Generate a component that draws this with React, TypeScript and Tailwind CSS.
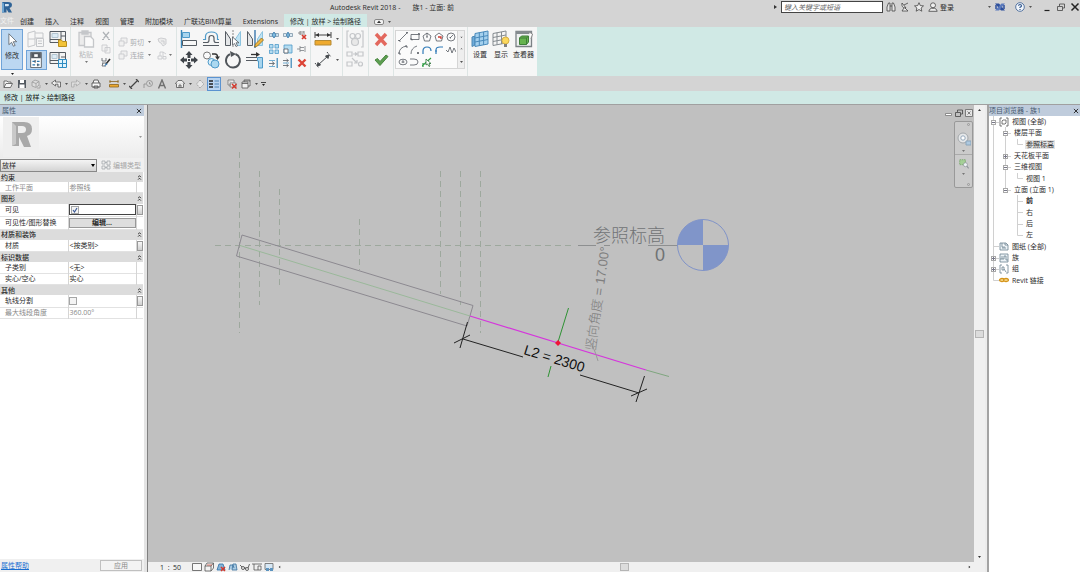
import type { ReactNode } from "react";

const INK = "#555b62";
const BLUE = "#4f9ac9";
const PALE = "#c5c7ca";

// Every drawing sits in its own square grid: 18 for big ribbon icons, 10 for small ones
const icons: Record<string, ReactNode> = {
  cursor: <path d="M5 1v14l3.500-3 2.300 5 2.200-1-2.400-4.800H15z" fill="#fff" stroke={INK} />,
  family: (
    <g fill="none" stroke={PALE}>
      <path d="M1 3l7-2v14l-7 2zM8 3h8v5H8M1 9h7" />
      <path d="M9.500 8.500h7v8h-7zM11 11h4M11 13.500h4" fill="#f5f5f5" />
    </g>
  ),
  familyLoad: (
    <g>
      <path d="M1 1.500h15.500v11H1z" fill="#f3f3f3" stroke={INK} />
      <path d="M1 9.500h11V1.500M12 6h4.500" fill="none" stroke={INK} />
      <path d="M3 3.500h6v4H3z" fill="#dcebf5" stroke="#b4c6d2" />
      <path d="M9.500 10h3l1 1.500h4v5h-8z" fill="#f2c237" stroke="#b98e1c" />
    </g>
  ),
  familyProject: (
    <g>
      <path d="M1 1.500h15.500v11H1z" fill="#f3f3f3" stroke={INK} />
      <path d="M1 9.500h9V1.500M12 6h4.500" fill="none" stroke={INK} />
      <path d="M3 3.500h5v4H3z" fill="#dcebf5" stroke="#b4c6d2" />
      <path d="M9.500 8.500h8v8h-8zM13.500 8.500v8M9.500 12.500h8" fill="#e2f4fc" stroke="#2f8cc2" />
    </g>
  ),
  properties: (
    <g>
      <path d="M3 .5h12v17H3z" fill="#fff" stroke={INK} />
      <path d="M3.500 1h11v6h-11z" fill={INK} />
      <path d="M7 2.500h4v3H7z" fill="#fff" />
      <path d="M5 10.500h3M10 10.500h3M5 14.500h3M10 14.500h3" stroke="#2b76ad" strokeWidth="1.300" />
      <path d="M8 9v3M11 13v3" stroke={INK} strokeWidth="1.300" />
    </g>
  ),
  paste: (
    <g fill="#ececec" stroke={PALE} strokeWidth="1.300">
      <path d="M2 2.500h12v13H2zM5 1h6v3H5z" />
      <path d="M7.500 6.500h6l3 3v7.500h-9z" fill="#fafafa" />
    </g>
  ),
  cut: <path d="M2 1l5.500 6.500M8 1L2.500 7.500M1 8.500h2M7 8.500h2" stroke="#aeb2b6" strokeWidth="1.200" fill="none" />,
  copy: <path d="M1 1h5v6H1zM4 3.500h5V9H4z" fill="#f3f3f3" stroke={PALE} />,
  brush: (
    <g fill="none">
      <path d="M1 1v3h4V1M1 6h4M2 6l-1 3h4" stroke={INK} />
      <path d="M9 2L5 7" stroke="#333" strokeWidth="1.600" />
      <path d="M5 6l-2 3.500 3.500-2z" fill="#3f82bb" />
    </g>
  ),
  cope: <path d="M3 1h6v5H6v3H1V4h2zM3 4h3v2" fill="#f0f0f0" stroke={PALE} />,
  joinFace: <path d="M1 2l3-1 5 1v5L6 9 4 6 2 5zM4 4h3v3" fill="#ececec" stroke={PALE} />,
  demolish: <path d="M1 6h4v3H1zM3 6V2h3v4M6 6.500h3V9H6zM6 2l3 2" fill="none" stroke={PALE} />,
  align: (
    <g>
      <path d="M1.500 0v18" stroke="#3b87b8" strokeWidth="1.400" />
      <path d="M2.500 2.500h7v5h-7z" fill="#a8d5ee" stroke={BLUE} />
      <path d="M2.500 10.500h14v5h-14z" fill="#f7f7f7" stroke={INK} />
    </g>
  ),
  offset: (
    <g fill="none">
      <path d="M1 15.500h16M1 12.500h4q2 0 2-2.500V8q0-2.500 2.500-2.500T12 8v2q0 2.500 2 2.500h3" stroke={INK} strokeWidth="1.200" />
      <path d="M1 9.500h2.500V6Q4 2 9.500 2T15.500 6v3.500H17" stroke={BLUE} strokeWidth="1.200" />
    </g>
  ),
  mirrorPick: (
    <g>
      <path d="M1.500 1.500v14h5V9z" fill="#e4e6e8" stroke={INK} />
      <path d="M16.500 1.500v14h-5V9z" fill="#bfe3f3" stroke="#8cc3df" />
      <path d="M9 0v18" stroke="#888" strokeDasharray="2 1" />
      <path d="M8.500 7v8l2-1.500 1.500 3 1.500-.7-1.500-3H15z" fill="#fff" stroke={INK} strokeWidth=".8" />
    </g>
  ),
  mirrorDraw: (
    <g>
      <path d="M1.500 1.500v14h5V9z" fill="#e4e6e8" stroke={INK} />
      <path d="M16.500 1.500v14h-5V9z" fill="#bfe3f3" stroke="#8cc3df" />
      <path d="M9 0v18" stroke="#2d6ea8" strokeWidth="1.300" />
      <path d="M15.500 8l2 2-6 6-3 1 1-3z" fill="#f1b740" stroke="#8a6a20" strokeWidth=".8" />
    </g>
  ),
  move: (
    <g fill="#3f444a">
      <path d="M9 0l3.500 4h-2v3h-3V4h-2zM9 18l3.500-4h-2v-3h-3v3h-2zM0 9l4-3.500v2h3v3H4v2zM18 9l-4-3.500v2h-3v3h3v2z" />
      <path d="M8 8h2v2H8z" />
    </g>
  ),
  copyLarge: (
    <g>
      <circle cx="5" cy="4.500" r="3.500" fill="#fafafa" stroke="#777" />
      <path d="M10 3h3q2.500 0 2.500 3" fill="none" stroke="#333" strokeWidth="1.400" />
      <path d="M13 5.500h5L15.500 9z" fill="#333" />
      <circle cx="9.500" cy="11" r="3.500" fill="#d8eefa" stroke={BLUE} />
      <circle cx="13" cy="13" r="4" fill="#abd8f0" stroke={BLUE} />
    </g>
  ),
  rotate: (
    <g>
      <path d="M11.500 3A7 7 0 1 1 6 3.200" fill="none" stroke="#50555a" strokeWidth="1.900" />
      <path d="M6 0l6 3L7 6z" fill="#50555a" />
    </g>
  ),
  trim: (
    <g>
      <path d="M0 6.500h11M0 9.500h11" stroke={INK} />
      <path d="M5 3.500h6" stroke="#333" strokeWidth="1.300" />
      <path d="M10 1l4 2.500-4 2.500z" fill="#333" />
      <path d="M11.500 6.500h5V17h-4V10h-1z" fill="#a8d5ee" stroke={BLUE} />
    </g>
  ),
  split: (
    <g>
      <path d="M.5 3.500h9v3h-9z" fill="#cfe4f0" stroke="#7f97a9" />
      <path d="M5 2L7 5 5 8 3 5z" stroke="#3375a8" fill="#82bde0" />
    </g>
  ),
  splitGap: (
    <g>
      <path d="M.5 3.500h3v3h-3zM6.500 3.500h3v3h-3z" fill="#dceaf2" stroke="#7f97a9" />
      <path d="M5 2L6.500 5 5 8 3.500 5z" stroke="#3375a8" fill="#82bde0" />
    </g>
  ),
  unpin: (
    <g>
      <path d="M3 1v4M3 2h4M3 4h3M7 1v4M1 3h2" stroke="#777" />
      <path d="M5 5l4 4M9 5L5 9" stroke="#d6392c" strokeWidth="1.700" />
    </g>
  ),
  array: <path d="M.5.5h3.500v3.500H.5zM6 .5h3.500v3.500H6zM.5 6h3.500v3.500H.5zM6 6h3.500v3.500H6z" fill="#b4dcf1" stroke={BLUE} />,
  scale: (
    <g>
      <path d="M1 1h8v8H1z" fill="#b4dcf1" stroke={BLUE} />
      <path d="M1 5h4v4H1z" fill="#fff" stroke={INK} />
    </g>
  ),
  pin: <path d="M3 2v6M3 3.500h4M3 6.500h4M8 2v6M0 5h3" fill="none" stroke="#7b8085" />,
  trimOne: (
    <g>
      <path d="M0 5.500h5M3 3.500l2.500 2-2.500 2" fill="none" stroke={INK} />
      <path d="M0 2.500h6M0 8.500h6" stroke={BLUE} />
      <path d="M7.500 0h1.500v10H7.500z" fill="#5e9cc4" />
    </g>
  ),
  trimMany: (
    <g>
      <path d="M0 2.500h5M0 7.500h5M3.500 1l2 1.500-2 1.500M3.500 6l2 1.500-2 1.500" fill="none" stroke={INK} />
      <path d="M0 5h6" stroke={BLUE} />
      <path d="M7.500 0h1.500v10H7.500z" fill="#5e9cc4" />
    </g>
  ),
  delete: <path d="M1.500 1.500l7 7M8.500 1.500l-7 7" stroke="#dc4436" strokeWidth="2.400" />,
  measure: (
    <g>
      <path d="M1 5h16M1 2v6M17 2v6" stroke="#444" />
      <path d="M5 3L1.500 5 5 7zM13 3l3.500 2L13 7z" fill="#333" />
      <path d="M1 10.500h16V15H1z" fill="#efaa2e" stroke="#b58a35" />
    </g>
  ),
  aligned: (
    <g stroke="#454a4e" fill="#454a4e">
      <path d="M4 14L14 5" />
      <path d="M3 15l1-3.500 2.500 2.500zM15 4l-3.500 1 2.500 2.500z" />
      <path d="M1 12l4 5M13 1l4 5" strokeDasharray="2 1" />
    </g>
  ),
  group: (
    <g fill="none" stroke={PALE} strokeWidth="1.200">
      <path d="M3 1H1v16h2M15 1h2v16h-2" />
      <circle cx="6.500" cy="6" r="2.500" />
      <circle cx="12" cy="6" r="2.500" />
      <circle cx="9" cy="12" r="3.500" fill="#e8e8e8" />
    </g>
  ),
  similar: (
    <g fill="none" stroke={PALE} strokeWidth="1.200">
      <path d="M1 2h5v4H1zM12 2h5v4h-5zM1 12h5v4H1zM7 4h4M9 2.500L11 4 9 5.500M6 8l5 5M11 10v3H8" />
      <circle cx="14.500" cy="14" r="2" />
    </g>
  ),
  cancel: <path d="M4 4l10 11M14 4L4 15" stroke="#e3685e" strokeWidth="3.400" />,
  finish: <path d="M3 9l2.500-1.500L8 10.500 14 4l2 1.500L8 14.500z" fill="#5c9e50" stroke="#4a8741" />,
  workSet: (
    <g>
      <path d="M1 7l3-1v9l-3 1.500z" fill="#6dabda" stroke="#4f88b3" />
      <path d="M4 3.500L17 1v13L4 16.500z" fill="#a4d0ee" stroke="#4a8abb" />
      <path d="M8.300 2.700v13M12.600 2v13M4 8l13-2.500M4 12l13-2.500" stroke="#4a8abb" />
    </g>
  ),
  workShow: (
    <g>
      <path d="M1 3.500L14 1v12L1 15.500z" fill="#f5f5f5" stroke="#858b90" />
      <path d="M5 2.700v12M9.500 2v12M1 7.500L14 5M1 11.500L14 9" stroke="#858b90" />
      <circle cx="13.500" cy="10.500" r="3.500" fill="#fbd85e" stroke="#d6ae42" />
      <path d="M12 14h3v3h-3z" fill="#808080" />
    </g>
  ),
  viewer: (
    <g>
      <path d="M1 1.500h15.500v15H1z" fill="#eef0f0" stroke="#7b8185" strokeWidth="1.300" />
      <path d="M1 1h15.500v3H1z" fill="#858b8f" />
      <path d="M4.500 8l2-2h7v6l-2 2.500h-7z" fill="#66b34e" stroke="#3f7f39" />
      <path d="M4.500 8h7v6.500M11.500 8l2-2" fill="none" stroke="#3f7f39" />
      <path d="M14 2l3.500 2L16 9" fill="#fff" stroke="#888" />
    </g>
  ),
  line: <path d="M1 9l8-8M0 8.500h2V10M8 .5h2V2" fill="none" stroke={INK} />,
  rect: <path d="M1 2.500h8v5H1zM0 7h2v1.500M8 1.500h1.500V3" fill="none" stroke={INK} />,
  polyIn: <path d="M5 1l4 3-1.500 5h-5L1 4zM5 1v4M4 5h2" fill="none" stroke={INK} />,
  polyOut: (
    <g fill="none">
      <path d="M5 1l4 3-1.500 5h-5L1 4z" stroke={INK} />
      <path d="M4 5h3v2" stroke="#cf3b32" strokeWidth="1.300" />
    </g>
  ),
  circle: (
    <g fill="none" stroke={INK}>
      <circle cx="5" cy="5" r="4" />
      <path d="M4 6l3-3M4 5v1h1" />
    </g>
  ),
  arc: <path d="M1 9Q1 2 9 1M0 8h2v2M8 0v2h2" fill="none" stroke={INK} />,
  arcCenter: <path d="M1 9Q1 3 7 1M7 7l2 2M7 9l2-2" fill="none" stroke={INK} />,
  tangent: <path d="M1 9V6Q1 2 5 2T9 6" fill="none" stroke="#2f7ab8" strokeWidth="1.200" />,
  fillet: <path d="M2 9V5Q2 2 6 2h3M1 6h2" fill="none" stroke="#2f7ab8" strokeWidth="1.200" />,
  spline: <path d="M0 5l2 2 2-5 2 6 2-5 2 4" fill="none" stroke={INK} />,
  ellipse: (
    <g fill="none" stroke={INK}>
      <ellipse cx="5" cy="5" rx="4" ry="2.800" />
      <path d="M5 3v3M3.500 5h3" />
    </g>
  ),
  halfEllipse: <path d="M2 2h2q4 0 4 3T4 8H2M1 1v2M1 7v2" fill="none" stroke={INK} />,
  pickLine: (
    <g>
      <path d="M0 9l9-8M1 6v4" stroke="#2f9e44" strokeWidth="1.200" />
      <path d="M4 2v6l1.500-1L7 9.500 8 9 7 6.500h2z" fill="#fff" stroke="#2c7237" strokeWidth=".8" />
    </g>
  ),
  open: <path d="M1 8.500V2h3l1 1h3v1.500M1 8.500l2-4h6.500l-2 4z" fill="#f5f5f5" stroke="#555" />,
  save: (
    <g>
      <path d="M1 1h8v8H1z" fill="#555b62" />
      <path d="M3 1h4v3H3zM2.500 5.500h5V9h-5z" fill="#fff" />
    </g>
  ),
  cubeSync: <path d="M1 3l3-2 4 1.500V6L5 8.500 1 7zM1 3l4 1.500V8M5 4.500l3-2M6 9h3V6" fill="#ddd" stroke="#9a9a9a" />,
  undo: <path d="M4.500 1L.5 4l4 3V5.200H7V8h2.500V3h-5z" fill="#eee" stroke="#555" />,
  redo: <path d="M5.500 1l4 3-4 3V5.200H3V8H.5V3h5z" fill="#ddd" stroke="#aaa" />,
  print: <path d="M2 4l1-3h4l1 3M1 4h8v4H1zM3 7h4v2H3z" fill="#f7f7f7" stroke="#444" />,
  ruler: <path d="M.5 5.500h9V8h-9zM.5 2.500h9M1 1v3M9 1v3" fill="#edaa31" stroke="#8b651f" />,
  dim: <path d="M1 9l8-8M0 7l3 3M7 0l3 3" fill="none" stroke="#444" strokeWidth="1.200" />,
  tag: (
    <g fill="none" stroke="#8c8c8c">
      <circle cx="6.500" cy="4.500" r="3" />
      <path d="M1 9V5M1 5h2M6.500 3v2H8" />
    </g>
  ),
  letterA: <path d="M1.500 9.500L5 1l3.500 8.500M3 6.500h4" fill="none" stroke="#707070" strokeWidth="1.400" />,
  home: <path d="M0 5l3-3.500h4L10 5M1.500 4.500V8.500h7v-4M4 8.500V6h2v2.500" fill="#eee" stroke="#555" />,
  section: <path d="M5 1L1.500 5 5 9M5 1l4 4-4 4" fill="#e8e8e8" stroke="#999" strokeDasharray="2 1" />,
  thin: (
    <g>
      <path d="M0 2h4M0 5h4M0 8h4" stroke="#222" strokeWidth="1.600" />
      <path d="M5.500 2H10M5.500 5H10M5.500 8H10" stroke="#2f6ea5" />
    </g>
  ),
  closeHidden: (
    <g>
      <path d="M1 1h6v3M1 1v5h3M3 4h6v4H3z" fill="#eee" stroke="#777" />
      <path d="M5 5l4.500 4.500M9.500 5L5 9.500" stroke="#d6392c" strokeWidth="1.500" />
    </g>
  ),
  windows: <path d="M1 3h6v6H1zM3 3V1h6v6H7M1 4.500h6M3 2h6" fill="#f1f1f1" stroke="#555" />,
  editType: <path d="M1 1h3v3H1zM1 6h3v3H1zM4 2.500h2M4 7.500h2M6 1h3v4H6zM6 6h3v3H6z" fill="none" stroke="#a5a9ad" />,
  binoculars: <path d="M1 9V5l1.500-4H4v8zM9 9V5L7.500 1H6v8zM4 4h2" fill="#e7e7e7" stroke="#444" />,
  satellite: <path d="M2 1q-1 5 4 5zM4 3l4-2M5 6l3 3H2l2-3" fill="#eee" stroke="#444" />,
  star: <path d="M5 .7l1.300 2.900 3.200.3-2.400 2.100.7 3.200L5 7.500 2.200 9.200l.7-3.200L.5 3.900l3.200-.3z" fill="#eee" stroke="#444" />,
  user: (
    <g fill="#eee" stroke="#444">
      <circle cx="5" cy="3.300" r="2.500" />
      <path d="M.8 9.300q.5-2.500 2.500-3h3.400q2 .5 2.500 3z" />
    </g>
  ),
  exchange: (
    <g>
      <path d="M0 1.500h4L10 8.500H6z" fill="#2d4f9c" />
      <path d="M6.500 1.500H10L4 8.500H0z" fill="#5c7bbd" />
      <path d="M1 3v4M9 3v4" stroke="#2d4f9c" strokeWidth="1.500" />
    </g>
  ),
  help: (
    <g fill="none" stroke="#31588f">
      <circle cx="5" cy="5" r="4.300" fill="#f2f6fb" />
      <path d="M3.500 3.800Q3.600 2.500 5 2.500t1.500 1.300Q6.500 4.700 5 5.300V6M5 7v1" strokeWidth="1.200" />
    </g>
  ),
  min: <path d="M2.500 8.500h5" stroke="#222" strokeWidth="1.200" />,
  restore: <path d="M1.500 4.500h5v4h-5zM3.500 4V2h5v4H7" fill="none" stroke="#444" />,
  close: <path d="M1.500 1.500l7 7M8.500 1.500l-7 7" stroke="#222" strokeWidth="1.500" />,
  minBox: <path d="M1.500 5.500h6v2h-6z" fill="#fff" stroke="#777" />,
  closeBox: <path d="M1.500 1.500h7v7h-7zM3.500 3.500l3 3M6.500 3.500l-3 3" fill="#e5e5e5" stroke="#666" />,
  chevrons: <path d="M3 4.500l2-2 2 2M3 8l2-2 2 2" fill="none" stroke="#222" strokeWidth="1.300" />,
  views: (
    <g fill="none" stroke="#555">
      <path d="M3 1H1v8h2M7 1h2v8H7" />
      <path d="M4 3h3v3L6 7H3V4z" />
    </g>
  ),
  sheets: <path d="M1 2h6l2 2v5H1zM3 2v4h3M3 7h4M6 2v2h3" fill="#edf3f7" stroke="#6b8190" />,
  families: <path d="M1 1h8v8H1zM1 6h4V3h2v4h2M3 3v3" fill="#edf3f7" stroke="#6b8190" />,
  groups: <path d="M3 1H1v8h2M7 1h2v8H7M3 3h2v3H3zM5 5l2 3" fill="none" stroke="#6b8190" />,
  link: (
    <g fill="#fbe3a0" stroke="#d5941a" strokeWidth="1.300">
      <ellipse cx="3" cy="5" rx="2.400" ry="1.500" />
      <ellipse cx="7" cy="5" rx="2.400" ry="1.500" />
    </g>
  ),
  scaleBox: <path d="M0.500 1.500h9v7h-9z" fill="#f8f8f8" stroke="#555" />,
  detail: (
    <g>
      <path d="M1 4h6v5H1zM1 4l2-3h6.500v5L7 9M7 4l2.500-3" fill="#f3f3f3" stroke="#555" />
      <path d="M3 3h5" stroke="#d05a4b" />
    </g>
  ),
  shadowOff: (
    <g>
      <path d="M1 8L3 2h4l2 6z" fill="#84b4d8" stroke="#2f6ea5" />
      <path d="M5 5l4 4M9 5L5 9" stroke="#d6392c" strokeWidth="1.500" />
    </g>
  ),
  crop: <path d="M1 8l1-5h3l1 3M4 8l1-6h3l1 6z" fill="#a9cbe3" stroke="#396f9c" />,
  glasses: (
    <g fill="none" stroke="#444">
      <path d="M0 3l2 2M9.500 2L8 6M4 6h2" />
      <circle cx="3" cy="6" r="1.500" />
      <circle cx="7" cy="7" r="1.500" />
    </g>
  ),
  reveal: <path d="M0 2h10M2 2v6h4M6 4h3v4H6z" fill="none" stroke="#555" />,
  temp: (
    <g>
      <path d="M1 1.500h8v6H1z" fill="#d7e8f5" stroke="#666" />
      <path d="M2 6h3v3H2zM6 6h3v3H6z" fill="#5d94bf" />
    </g>
  ),
  wheel: (
    <g fill="none">
      <circle cx="6" cy="6" r="5" fill="#e6e8ea" stroke="#a2a7ab" />
      <circle cx="6" cy="6" r="2.200" fill="#fff" stroke="#95a8ba" />
      <path d="M9 9h5v4H9z" fill="#aec9e0" stroke="#8aa5bb" />
    </g>
  ),
  zoomRegion: (
    <g fill="none">
      <path d="M1 1h8v7H1z" fill="#a5cf97" stroke="#6d9f60" strokeDasharray="2 1" />
      <circle cx="9" cy="8" r="2.800" fill="#eef3f6" stroke="#8b9298" />
      <path d="M11 10l2.500 3" stroke="#8b9298" strokeWidth="1.500" />
    </g>
  ),
};

function Icon({ name, grid = 10, className = "size-2.5" }: { name: string; grid?: number; className?: string }) {
  return (
    <svg viewBox={`0 0 ${grid} ${grid}`} strokeWidth={grid === 10 ? 0.8 : 1} className={`shrink-0 ${className}`} aria-hidden="true">
      {icons[name]}
    </svg>
  );
}

function Big({ name, label }: { name: string; label: string }) {
  return (
    <button type="button" aria-label={label} className="flex">
      <Icon name={name} grid={18} className="size-[18px]" />
    </button>
  );
}

function Small({ name, label }: { name: string; label: string }) {
  return (
    <button type="button" aria-label={label} className="flex">
      <Icon name={name} />
    </button>
  );
}

function Caret({ className = "text-[#555]" }: { className?: string }) {
  return (
    <svg viewBox="0 0 3 2" className={`h-0.5 w-[3px] shrink-0 ${className}`} aria-hidden="true">
      <path d="M0 0h3L1.500 2z" fill="currentColor" />
    </svg>
  );
}

function Tool({ name, label, active = false }: { name: string; label: string; active?: boolean }) {
  return (
    <button
      type="button"
      aria-label={label}
      className={`flex h-3.5 w-3.5 items-center justify-center ${active ? "border border-[#5b93d0] bg-[#b9d4f0]" : ""}`}
    >
      <Icon name={name} />
    </button>
  );
}

function TitleBar() {
  return (
    <header className="flex h-3.5 items-center">
      <svg viewBox="0 0 12 12" className="ml-px size-3 shrink-0" aria-hidden="true">
        <path d="M1 1h6q4 0 4 3 0 2.500-2.500 3L11 11.500H7.500L5.500 8v3.500H1z" fill="#2f6396" />
        <path d="M4 3h3q1 0 1 1T7 5.300H4z" fill="#d4e4f1" />
        <path d="M1 1l2 1.500v9H1z" fill="#6fa6d2" />
      </svg>
      <div className="flex flex-1 gap-3 pl-[317px] whitespace-pre">
        <h1>Autodesk Revit 2018 -</h1>
        <span>族1 - 立面: 前</span>
      </div>
      <svg viewBox="0 0 3 4" className="mr-1 h-1 w-[3px]" aria-hidden="true">
        <path d="M0 0l3 2-3 2z" fill="#333" />
      </svg>
      <input
        type="text"
        aria-label="搜索"
        placeholder="键入关键字或短语"
        className="h-3 w-[102px] border border-[#444] bg-white px-0.5 italic placeholder:text-[#666]"
      />
      <div className="flex w-[197px] items-center pl-[3px]">
        <div className="flex gap-1">
          <Small name="binoculars" label="搜索帮助" />
          <Small name="satellite" label="通讯中心" />
          <Small name="star" label="收藏夹" />
          <button type="button" className="flex items-center gap-0.5">
            <Icon name="user" />
            登录
          </button>
        </div>
        <div className="ml-auto flex items-center gap-1">
          <Caret />
          <Small name="exchange" label="应用程序" />
          <span className="w-0.5" />
          <Small name="help" label="帮助" />
          <Caret />
          <span className="w-0.5" />
          <Small name="min" label="最小化" />
          <Small name="restore" label="还原" />
          <Small name="close" label="关闭" />
        </div>
      </div>
    </header>
  );
}

const tabs = ["创建", "插入", "注释", "视图", "管理", "附加模块", "广联达BIM算量", "Extensions"];

function Tabs() {
  return (
    <nav className="flex h-[13px] items-stretch gap-px whitespace-nowrap">
      <button type="button" className="w-3.5 text-white/70">文件</button>
      {tabs.map((tab) => (
        <button key={tab} type="button" className="px-[5px] pt-0.5">{tab}</button>
      ))}
      <button type="button" className="bg-[#d0e9e5] px-1.5 pt-0.5">修改 | 放样 &gt; 绘制路径</button>
      <button type="button" aria-label="最小化功能区" className="ml-1.5 flex items-center gap-1 pt-0.5">
        <svg viewBox="0 0 10 6" className="h-1.5 w-2.5" aria-hidden="true">
          <rect x=".5" y=".5" width="9" height="5" rx="1.500" fill="#f2f2f2" stroke="#888" />
          <path d="M5 1.500l2 2.500H3z" fill="#333" />
        </svg>
        <Caret />
      </button>
    </nav>
  );
}

const bigModify = [
  ["align", "对齐"], ["offset", "偏移"], ["mirrorPick", "镜像 - 拾取轴"], ["mirrorDraw", "镜像 - 绘制轴"],
  ["move", "移动"], ["copyLarge", "复制"], ["rotate", "旋转"], ["trim", "修剪"],
];

const smallModify = [
  ["split", "拆分图元"], ["splitGap", "用间隙拆分"], ["unpin", "解锁"],
  ["array", "阵列"], ["scale", "缩放"], ["pin", "锁定"],
  ["trimOne", "修剪单个"], ["trimMany", "修剪多个"], ["delete", "删除"],
];

const drawTools = [
  ["line", "线"], ["rect", "矩形"], ["polyIn", "内接多边形"], ["polyOut", "外接多边形"], ["circle", "圆"],
  ["arc", "起点终点弧"], ["arcCenter", "圆心弧"], ["tangent", "相切弧"], ["fillet", "圆角弧"], ["spline", "样条曲线"],
  ["ellipse", "椭圆"], ["halfEllipse", "半椭圆"], ["pickLine", "拾取线"],
];

function Ribbon() {
  const panel = "flex border-r border-[#dde5e4] bg-[#f6f6f6]";
  return (
    <div className="flex h-[49px] bg-[#d0e9e5]">
      <section className={`${panel} w-[71px] pl-px`}>
        <div className="flex flex-col items-center pt-0.5">
          <button type="button" className="flex h-[41px] w-[22px] flex-col items-center gap-1 border border-[#6fa3d8] bg-[#bcd7f1] pt-[3px]">
            <Icon name="cursor" grid={18} className="size-3.5" />
            修改
          </button>
          <Caret className="mt-[3px] text-[#222]" />
        </div>
        <div className="grid grid-cols-[22px_22px] grid-rows-[20px_21px] place-items-center pt-0.5 pl-0.5">
          <Big name="family" label="族类别" />
          <Big name="familyLoad" label="载入到项目" />
          <button type="button" aria-label="属性" className="flex h-5 w-[21px] items-center justify-center border border-[#6fa3d8] bg-[#bcd7f1]">
            <Icon name="properties" grid={18} className="size-4" />
          </button>
          <Big name="familyProject" label="载入到项目并关闭" />
        </div>
      </section>

      <section className={`${panel} w-[43px] gap-1.5 pl-1.5 text-[#b4b6b9]`}>
        <button type="button" className="flex flex-col items-center pt-[3px]">
          <Icon name="paste" grid={18} className="size-[18px]" />
          <span className="mt-0.5 mb-0.5">粘贴</span>
          <Caret className="text-[#777]" />
        </button>
        <div className="flex flex-col gap-[3px] pt-1">
          <Small name="cut" label="剪切到剪贴板" />
          <Small name="copy" label="复制到剪贴板" />
          <Small name="brush" label="匹配类型" />
        </div>
      </section>

      <section className={`${panel} w-[63px] flex-col gap-[3px] pt-2.5 pl-1 text-[#a9acaf]`}>
        <div className="flex items-center gap-0.5">
          <button type="button" className="flex items-center gap-0.5"><Icon name="cope" />剪切</button>
          <Caret className="ml-0.5 mr-1 text-[#777]" />
          <Small name="joinFace" label="连接面" />
        </div>
        <div className="flex items-center gap-0.5">
          <button type="button" className="flex items-center gap-0.5"><Icon name="cope" />连接</button>
          <Caret className="ml-0.5 mr-1 text-[#777]" />
          <Small name="demolish" label="拆除" />
          <Caret className="text-[#777]" />
        </div>
      </section>

      <section className={`${panel} w-[134px] gap-1 pt-[3px] pl-[3px]`}>
        <div className="grid h-[39px] grid-cols-4 content-between gap-x-1">
          {bigModify.map(([name, label]) => <Big key={name} name={name} label={label} />)}
        </div>
        <div className="grid h-[38px] grid-cols-3 content-between gap-x-1 pl-px">
          {smallModify.map(([name, label]) => <Small key={name} name={name} label={label} />)}
        </div>
      </section>

      <section className={`${panel} w-8 flex-col gap-[3px] pt-[3px] pl-[3px]`}>
        <div className="flex items-center gap-1"><Big name="measure" label="测量" /><Caret /></div>
        <div className="flex items-center gap-1"><Big name="aligned" label="对齐标注" /><Caret /></div>
      </section>

      <section className={`${panel} w-[26px] flex-col gap-0.5 pt-[3px] pl-[3px]`}>
        <Big name="group" label="创建组" />
        <Big name="similar" label="创建类似" />
      </section>

      <section className={`${panel} w-[25px] flex-col items-center gap-[3px] pt-[3px]`}>
        <Big name="cancel" label="取消编辑模式" />
        <Big name="finish" label="完成编辑模式" />
      </section>

      <section className={`${panel} w-[74px] pt-[3px] pl-px`}>
        <div className="flex h-[39px] w-[70px] border border-[#d5d5d5] bg-[#fbfbfb]">
          <div className="grid grid-cols-5 content-between gap-x-0.5 py-px pl-0.5">
            {drawTools.map(([name, label]) => <Small key={name} name={name} label={label} />)}
          </div>
          <div className="ml-auto grid w-[7px] grid-rows-3 place-items-center divide-y divide-[#d5d5d5] border-l border-[#d5d5d5] bg-[#eee]">
            <Caret className="rotate-180" />
            <Caret />
            <Caret />
          </div>
        </div>
      </section>

      <section className="flex w-[69px] items-start justify-between bg-[#f6f6f6] px-[3px] pt-[3px]">
        {[["workSet", "设置"], ["workShow", "显示"], ["viewer", "查看器"]].map(([name, label]) => (
          <button key={name} type="button" className="flex flex-col items-center gap-0.5 whitespace-nowrap">
            <Icon name={name} grid={18} className="size-[18px]" />
            {label}
          </button>
        ))}
      </section>
    </div>
  );
}

function QuickAccess() {
  const dot = <span className="flex w-1.5 justify-center"><Caret /></span>;
  return (
    <div className="flex h-[15px] items-center pl-px">
      <Tool name="open" label="打开" />
      <Tool name="save" label="保存" />
      <Tool name="cubeSync" label="同步" />
      {dot}
      <Tool name="undo" label="放弃" />
      {dot}
      <Tool name="redo" label="重做" />
      {dot}
      <Tool name="print" label="打印" />
      <span className="w-1" />
      <Tool name="ruler" label="测量" />
      {dot}
      <Tool name="dim" label="尺寸标注" />
      <Tool name="tag" label="标记" />
      <Tool name="letterA" label="文字" />
      <span className="w-1" />
      <Tool name="home" label="默认三维视图" />
      {dot}
      <Tool name="section" label="剖面" />
      <Tool name="thin" label="细线" active />
      <span className="w-1" />
      <Tool name="closeHidden" label="关闭隐藏窗口" />
      <Tool name="windows" label="切换窗口" />
      {dot}
      <span className="ml-0.5 flex w-[5px] justify-center border-t border-[#444] pt-px"><Caret className="text-[#222]" /></span>
    </div>
  );
}

type Prop = { label: string; value?: ReactNode; muted?: boolean; side?: boolean };

function Check({ label, checked = false }: { label: string; checked?: boolean }) {
  return (
    <span className="relative block size-2">
      <input
        type="checkbox"
        aria-label={label}
        defaultChecked={checked}
        className="peer block size-2 appearance-none border border-[#a5a6a6] bg-[#f4f4f4]"
      />
      <svg viewBox="0 0 8 8" className="pointer-events-none absolute inset-0 hidden size-2 peer-checked:block" aria-hidden="true">
        <path d="M2 4l1.500 2L6 2" fill="none" stroke="#3c5a96" strokeWidth="1.200" />
      </svg>
    </span>
  );
}

// no value means a group heading
const props: Prop[] = [
  { label: "约束" },
  { label: "工作平面", value: "参照线", muted: true },
  { label: "图形" },
  {
    label: "可见",
    value: <div className="flex h-[11px] items-center border border-[#444] bg-white pl-px"><Check label="可见" checked /></div>,
    side: true,
  },
  {
    label: "可见性/图形替换",
    value: (
      <button type="button" className="block h-2.5 w-full border border-[#999] bg-[#dedede] font-bold leading-[8px]">编辑...</button>
    ),
  },
  { label: "材质和装饰" },
  { label: "材质", value: "<按类别>", side: true },
  { label: "标识数据" },
  { label: "子类别", value: "<无>" },
  { label: "实心/空心", value: "实心" },
  { label: "其他" },
  { label: "轨线分割", value: <Check label="轨线分割" />, side: true },
  { label: "最大线段角度", value: "360.00°", muted: true },
];

function Properties() {
  return (
    <aside className="flex w-36 shrink-0 flex-col bg-[#f0f0f0]">
      <div className="flex h-[11px] items-center justify-between bg-[#bfccdc] pr-px pl-0.5 text-[#465a70]">
        <h2>属性</h2>
        <button type="button" aria-label="关闭属性"><Icon name="close" className="mr-px size-1.5" /></button>
      </div>
      <div className="flex h-[42px] items-center justify-between bg-linear-to-b from-white to-[#ececec] pr-0.5">
        <svg viewBox="0 0 36 40" className="ml-[3px] h-10 w-9" aria-hidden="true">
          <rect width="36" height="40" fill="#efefef" />
          <path d="M9 5h12q8 0 8 7 0 5.500-5 7L28 30h-7l-5-10v9H9z" fill="#a9a9a9" />
          <path d="M15 9h4q4 0 4 3.500T19 16h-4z" fill="#efefef" />
          <path d="M9 5l4 4v18l-4 2z" fill="#c9c9c9" />
        </svg>
        <Caret className="text-[#999]" />
      </div>
      <div className="flex h-3.5 items-center gap-1 bg-[#f0f0f0]">
        <div className="relative w-[97px]">
          <select aria-label="类型" className="block h-[13px] w-full appearance-none border border-[#888] bg-linear-to-b from-[#f4f4f4] to-[#d4d4d4] pl-px leading-[11px]">
            <option>放样</option>
          </select>
          <svg viewBox="0 0 4 3" className="pointer-events-none absolute top-[5px] right-0.5 h-[3px] w-1" aria-hidden="true">
            <path d="M0 0h4L2 3z" />
          </svg>
        </div>
        <button type="button" className="flex items-center gap-0.5 text-[#a5a5a5]">
          <Icon name="editType" />
          编辑类型
        </button>
      </div>
      <div className="flex-1 bg-white">
        <table className="h-[147px] w-[143px] table-fixed border-collapse">
          <colgroup>
            <col className="w-[68px]" />
            <col />
            <col className="w-[7px]" />
          </colgroup>
          <tbody>
            {props.map((p) =>
              p.value === undefined ? (
                <tr key={p.label} className="bg-[#dcdcdc]">
                  <th colSpan={2} className="p-0 pl-px text-left font-medium">{p.label}</th>
                  <td className="p-0"><Icon name="chevrons" className="size-[7px]" /></td>
                </tr>
              ) : (
                <tr key={p.label} className={`border-b border-[#e2e2e2] ${p.muted ? "text-[#8a8a8a]" : ""}`}>
                  <th className="border-r border-[#d5d5d5] p-0 pl-[5px] text-left font-normal whitespace-nowrap">{p.label}</th>
                  <td className={`border-r border-[#d5d5d5] p-0 whitespace-nowrap ${typeof p.value === "string" ? "pl-px" : ""}`}>{p.value}</td>
                  <td className="p-0">
                    {p.side && (
                      <button type="button" aria-label={`关联${p.label}`} className="block h-2.5 w-1.5 border border-[#999] bg-linear-to-b from-[#f8f8f8] to-[#cfcfcf]" />
                    )}
                  </td>
                </tr>
              )
            )}
          </tbody>
        </table>
      </div>
      <div className="flex h-[13px] items-center justify-between pr-0.5 pl-px">
        <a href="#help" className="text-[#1a6fd0] underline">属性帮助</a>
        <button type="button" className="h-[11px] w-[42px] border border-[#c0c0c0] bg-[#f3f3f3] text-[#8a8a8a]">应用</button>
      </div>
    </aside>
  );
}

const guides = [
  [239, 152, 333], [259, 171, 305], [279, 189, 288], [359, 219, 270],
  [440, 171, 294], [460, 171, 305], [480, 171, 333],
];

function Drawing() {
  return (
    <svg className="absolute inset-0 size-full" role="img" aria-label="立面: 前">
      {/* shift window coordinates to the corner of the view */}
      <g transform="translate(-148 -105)" fill="none">
        <g stroke="#9da89d" strokeDasharray="6 4">
          {guides.map(([x, top, bottom]) => (
            <path key={x} d={`M${x}.500 ${top}V${bottom}`} />
          ))}
          <path d="M215 245.500H575" />
        </g>
        <path d="M578 245.500h18M604 245.500h6M648 245.500h29" stroke="#8d8f90" />
        <path d="M242 235L473 305.500 467 326 236.500 256z" stroke="#8c8990" />
        <path d="M240 245.500L470 316" stroke="#9ab89a" />
        <path d="M646 370L669 376.500" stroke="#7fa67f" />
        <path d="M470 316L646 370" stroke="#d535dc" strokeWidth="1.200" />
        <path d="M568.500 308L558 342" stroke="#2e9233" />
        <path d="M551 366l-3 11" stroke="#2e9233" />
        <path d="M592 345q4 8 6 16" stroke="#9a9a9a" />
        <path d="M558 340l3 3-3 3-3-3z" fill="#ef1438" />
        <path d="M467.500 322L460 348M454 343l16-8M463 339L523 357M580 375L639 393M644.500 376L636 402M631 396l16-7" stroke="#222" />
        <text transform="translate(523 354) rotate(17)" fill="#111" className="font-['Liberation_Sans',sans-serif] text-[14px]">L2 = 2300</text>
        <text transform="translate(595 351) rotate(-82)" fill="#7f7f7f" className="font-['Liberation_Sans','Noto_Sans_CJK_SC',sans-serif] text-[13px] font-light">竖向角度 = 17.00°</text>
        <text x="593" y="242" fill="#707375" className="font-['Noto_Sans_CJK_SC',sans-serif] text-[18px] font-light">参照标高</text>
        <text x="655" y="261" fill="#707375" className="font-['Liberation_Sans',sans-serif] text-[18px]">0</text>
        <circle cx="703" cy="245" r="25.500" stroke="#8093c8" />
        <path d="M703 245v-25.500A25.500 25.500 0 0 0 677.500 245zM703 245v25.500A25.500 25.500 0 0 0 728.500 245z" fill="#8095c9" />
      </g>
    </svg>
  );
}

const viewTools = [
  ["scaleBox", "详细程度"], ["detail", "视觉样式"], ["shadowOff", "关闭阴影"], ["crop", "裁剪视图"],
  ["glasses", "临时隐藏"], ["reveal", "显示隐藏图元"], ["temp", "预览可见性"],
];

function View() {
  return (
    <main className="flex min-w-0 flex-1 flex-col border-l border-[#808080] bg-[#f0f0f0]">
      <div className="flex min-h-0 flex-1">
        <div className="relative flex-1 overflow-hidden bg-[#c0c0c0]">
          <Drawing />
          <div className="absolute top-[3px] right-0 flex">
            <Small name="minBox" label="最小化视图" />
            <Small name="restore" label="还原视图" />
            <Small name="closeBox" label="关闭视图" />
          </div>
          <div className="absolute top-4 right-px flex h-[67px] w-[19px] flex-col items-center rounded-xs border border-[#999] bg-[#cbcbcb] pt-px">
            <span className="mr-0.5 size-[3px] self-end rounded-full border border-[#999]" />
            <button type="button" aria-label="控制盘" className="mt-1.5"><Icon name="wheel" grid={14} className="size-3.5" /></button>
            <Caret className="mt-1 text-[#777]" />
            <hr className="my-0.5 w-full border-[#aaa]" />
            <button type="button" aria-label="区域放大" className="mt-0.5"><Icon name="zoomRegion" grid={14} className="size-2.5" /></button>
            <Caret className="mt-1 text-[#777]" />
            <span className="mt-auto mr-0.5 mb-px size-[3px] self-end rounded-full border border-[#999]" />
          </div>
        </div>
        <div className="flex w-[11px] flex-col items-center bg-[#f0f0f0] py-1">
          <Caret className="rotate-180 text-[#333]" />
          <span className="mt-[219px] h-2 w-[9px] border border-[#b5b5b5] bg-[#dcdcdc]" />
          <Caret className="mt-auto text-[#333]" />
        </div>
      </div>
      <div className="flex h-2.5 items-center pr-[3px] pl-3">
        <span className="w-8 whitespace-pre">1  :  50</span>
        <div className="flex gap-0.5">
          {viewTools.map(([name, label]) => <Small key={name} name={name} label={label} />)}
        </div>
        <Caret className="ml-1 rotate-90 text-[#444]" />
        <div className="flex flex-1 justify-center">
          <span className="h-2 w-[9px] border border-[#b5b5b5] bg-[#dcdcdc]" />
        </div>
        <Caret className="mr-[11px] -rotate-90 text-[#333]" />
      </div>
    </main>
  );
}

// cells: v = line, t = tee, l = corner, + - _ = toggles, space = nothing
const tree = [
  { cells: "-", icon: "views", text: "视图 (全部)" },
  { cells: "v-", text: "楼层平面" },
  { cells: "vvl", text: "参照标高", selected: true },
  { cells: "v+", text: "天花板平面" },
  { cells: "v-", text: "三维视图" },
  { cells: "vvl", text: "视图 1" },
  { cells: "v_", text: "立面 (立面 1)" },
  { cells: "v t", text: "前", bold: true },
  { cells: "v t", text: "右" },
  { cells: "v t", text: "后" },
  { cells: "v l", text: "左" },
  { cells: "t", icon: "sheets", text: "图纸 (全部)" },
  { cells: "+", icon: "families", text: "族" },
  { cells: "+", icon: "groups", text: "组" },
  { cells: "l", icon: "link", text: "Revit 链接" },
];

const cellPaths: Record<string, string> = {
  v: "M6.500 0V12",
  t: "M6.500 0V12M6.500 6.500H12",
  l: "M6.500 0V6.500H12",
  "-": "M6.500 0V12M6.500 6.500H12",
  "+": "M6.500 0V12M6.500 6.500H12",
  _: "M6.500 0V6.500H12",
};

function TreeCell({ kind }: { kind: string }) {
  const toggle = "+-_".includes(kind);
  return (
    <svg viewBox="0 0 12 12" className="size-3 shrink-0" aria-hidden="true">
      {cellPaths[kind] && <path d={cellPaths[kind]} fill="none" stroke="#d0d0d0" />}
      {toggle && <rect x="4.500" y="4.500" width="4" height="4" fill="#fff" stroke="#a8a8a8" />}
      {toggle && <path d={kind === "+" ? "M5 6.500h3M6.500 5v3" : "M5 6.500h3"} stroke="#778" />}
    </svg>
  );
}

function Browser() {
  return (
    <aside className="w-[93px] shrink-0 border-l-2 border-[#a3a3a3] bg-white">
      <div className="flex h-[11px] items-center justify-between bg-[#bfccdc] pr-px text-[#465a70]">
        <h2>项目浏览器 - 族1</h2>
        <button type="button" aria-label="关闭项目浏览器"><Icon name="close" className="size-1.5" /></button>
      </div>
      <ul className="grid h-[170px] auto-rows-fr whitespace-nowrap">
        {tree.map((node) => (
          <li key={node.text} className="-ml-0.5 flex items-center overflow-hidden">
            {node.cells.split("").map((kind, i) => <TreeCell key={i} kind={kind} />)}
            {node.icon && <Icon name={node.icon} />}
            <span className={`ml-0.5 px-px ${node.selected ? "bg-[#e3e3e3]" : ""} ${node.bold ? "font-bold" : ""}`}>{node.text}</span>
          </li>
        ))}
      </ul>
    </aside>
  );
}

export default function App() {
  return (
    <div className="flex h-screen flex-col overflow-hidden bg-[#d4d4d4] font-['Open_Sans','Noto_Sans_CJK_SC',sans-serif] text-[7px] leading-[9px] text-[#2b2b2b]">
      <TitleBar />
      <Tabs />
      <Ribbon />
      <QuickAccess />
      <div className="flex h-[13px] items-center bg-[#d0e9e5] pl-1 text-[#111]">修改 | 放样 &gt; 绘制路径</div>
      <div className="flex min-h-0 flex-1 border-t border-[#a0a0a0]">
        <Properties />
        <div className="w-[3px] shrink-0 bg-[#e4e4e4]" />
        <View />
        <div className="w-0.5 shrink-0 bg-[#ececec]" />
        <Browser />
      </div>
    </div>
  );
}
